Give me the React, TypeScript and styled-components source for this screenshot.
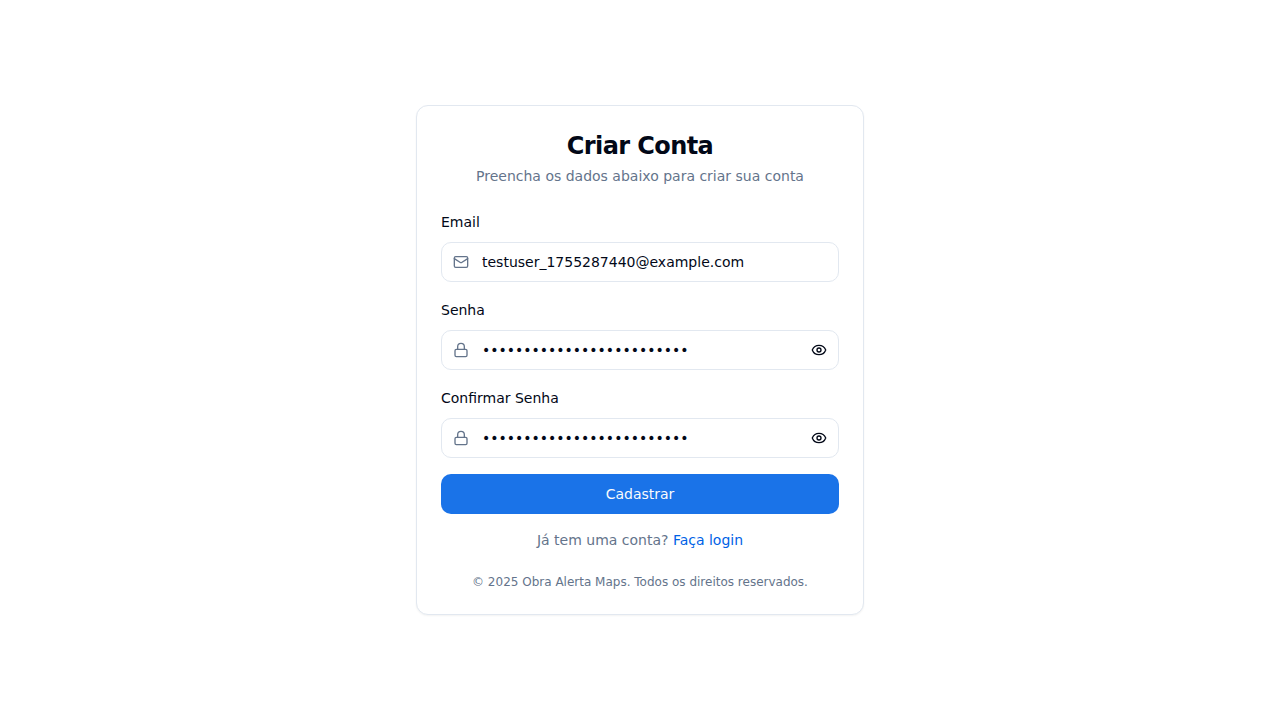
import React, { useState } from "react";
import type { FormEvent, ReactNode } from "react";
import styled, { createGlobalStyle } from "styled-components";
import { Eye, EyeOff, Lock, Mail } from "lucide-react";

const colors = {
  background: "#ffffff",
  text: "#020817",
  muted: "#64748b",
  border: "#e2e8f0",
  primary: "#1a73e8",
  link: "#0062e6",
};

const GlobalStyle = createGlobalStyle`
  *, *::before, *::after {
    box-sizing: border-box;
  }
  body {
    margin: 0;
    background: ${colors.background};
    color: ${colors.text};
    font-family: "DejaVu Sans", sans-serif;
    font-size: 14px;
    line-height: 20px;
  }
  button, input {
    font: inherit;
    color: inherit;
  }
`;

const Page = styled.main`
  display: flex;
  align-items: center;
  justify-content: center;
  min-height: 100vh;
  padding: 16px;
`;

const Card = styled.section`
  width: 100%;
  max-width: 448px;
  border: 1px solid ${colors.border};
  border-radius: 12px;
  background: ${colors.background};
  box-shadow: 0 1px 2px rgba(0, 0, 0, 0.05);
`;

const CardHeader = styled.header`
  display: flex;
  flex-direction: column;
  gap: 4px;
  padding: 24px;
  text-align: center;
`;

const Title = styled.h1`
  margin: 0;
  font-size: 24px;
  font-weight: 700;
  line-height: 32px;
  letter-spacing: -0.025em;
`;

const Subtitle = styled.p`
  margin: 0;
  color: ${colors.muted};
`;

const Form = styled.form`
  display: flex;
  flex-direction: column;
  gap: 16px;
  padding: 0 24px;
`;

const FieldGroup = styled.div`
  display: flex;
  flex-direction: column;
  gap: 8px;
`;

const Label = styled.label`
  line-height: 24px;
`;

const InputBox = styled.div`
  display: flex;
  align-items: center;
  height: 40px;
  padding: 0 11px;
  gap: 13px;
  border: 1px solid ${colors.border};
  border-radius: 10px;

  &:focus-within {
    border-color: ${colors.primary};
  }
`;

const LeadingIcon = styled.span`
  display: flex;
  color: ${colors.muted};
`;

const Input = styled.input`
  flex: 1;
  min-width: 0;
  padding: 0;
  border: 0;
  outline: 0;
  background: transparent;
`;

const ToggleButton = styled.button`
  display: flex;
  padding: 0;
  border: 0;
  background: transparent;
  cursor: pointer;
`;

const SubmitButton = styled.button`
  height: 40px;
  border: 0;
  border-radius: 10px;
  background: ${colors.primary};
  color: #f8fafc;
  cursor: pointer;
`;

const CardFooter = styled.footer`
  display: flex;
  flex-direction: column;
  gap: 24px;
  padding: 16px 24px 24px;
  color: ${colors.muted};
  text-align: center;
`;

const LoginPrompt = styled.p`
  margin: 0;
`;

const LoginLink = styled.a`
  color: ${colors.link};
  text-decoration: none;

  &:hover {
    text-decoration: underline;
  }
`;

const Copyright = styled.p`
  margin: 0;
  font-size: 12px;
  line-height: 16px;
`;

interface FieldProps {
  id: string;
  label: string;
  icon: ReactNode;
  type: "email" | "password";
  initialValue: string;
}

function Field({ id, label, icon, type, initialValue }: FieldProps) {
  const [value, setValue] = useState(initialValue);
  const [visible, setVisible] = useState(false);
  const isPassword = type === "password";

  return (
    <FieldGroup>
      <Label htmlFor={id}>{label}</Label>
      <InputBox>
        <LeadingIcon>{icon}</LeadingIcon>
        <Input
          id={id}
          type={isPassword && visible ? "text" : type}
          value={value}
          onChange={(event) => setValue(event.target.value)}
        />
        {isPassword && (
          <ToggleButton
            type="button"
            aria-label={visible ? "Ocultar senha" : "Mostrar senha"}
            onClick={() => setVisible(!visible)}
          >
            {visible ? <EyeOff size={16} /> : <Eye size={16} />}
          </ToggleButton>
        )}
      </InputBox>
    </FieldGroup>
  );
}

export default function App() {
  const handleSubmit = (event: FormEvent) => event.preventDefault();

  return (
    <>
      <GlobalStyle />
      <Page>
        <Card>
          <CardHeader>
            <Title>Criar Conta</Title>
            <Subtitle>Preencha os dados abaixo para criar sua conta</Subtitle>
          </CardHeader>
          <Form onSubmit={handleSubmit}>
            <Field
              id="email"
              label="Email"
              icon={<Mail size={16} />}
              type="email"
              initialValue="testuser_1755287440@example.com"
            />
            <Field
              id="password"
              label="Senha"
              icon={<Lock size={16} />}
              type="password"
              initialValue="SenhaSegura1755287440!Abc"
            />
            <Field
              id="confirm-password"
              label="Confirmar Senha"
              icon={<Lock size={16} />}
              type="password"
              initialValue="SenhaSegura1755287440!Abc"
            />
            <SubmitButton type="submit">Cadastrar</SubmitButton>
          </Form>
          <CardFooter>
            <LoginPrompt>
              Já tem uma conta? <LoginLink href="#login">Faça login</LoginLink>
            </LoginPrompt>
            <Copyright>
              © 2025 Obra Alerta Maps. Todos os direitos reservados.
            </Copyright>
          </CardFooter>
        </Card>
      </Page>
    </>
  );
}
